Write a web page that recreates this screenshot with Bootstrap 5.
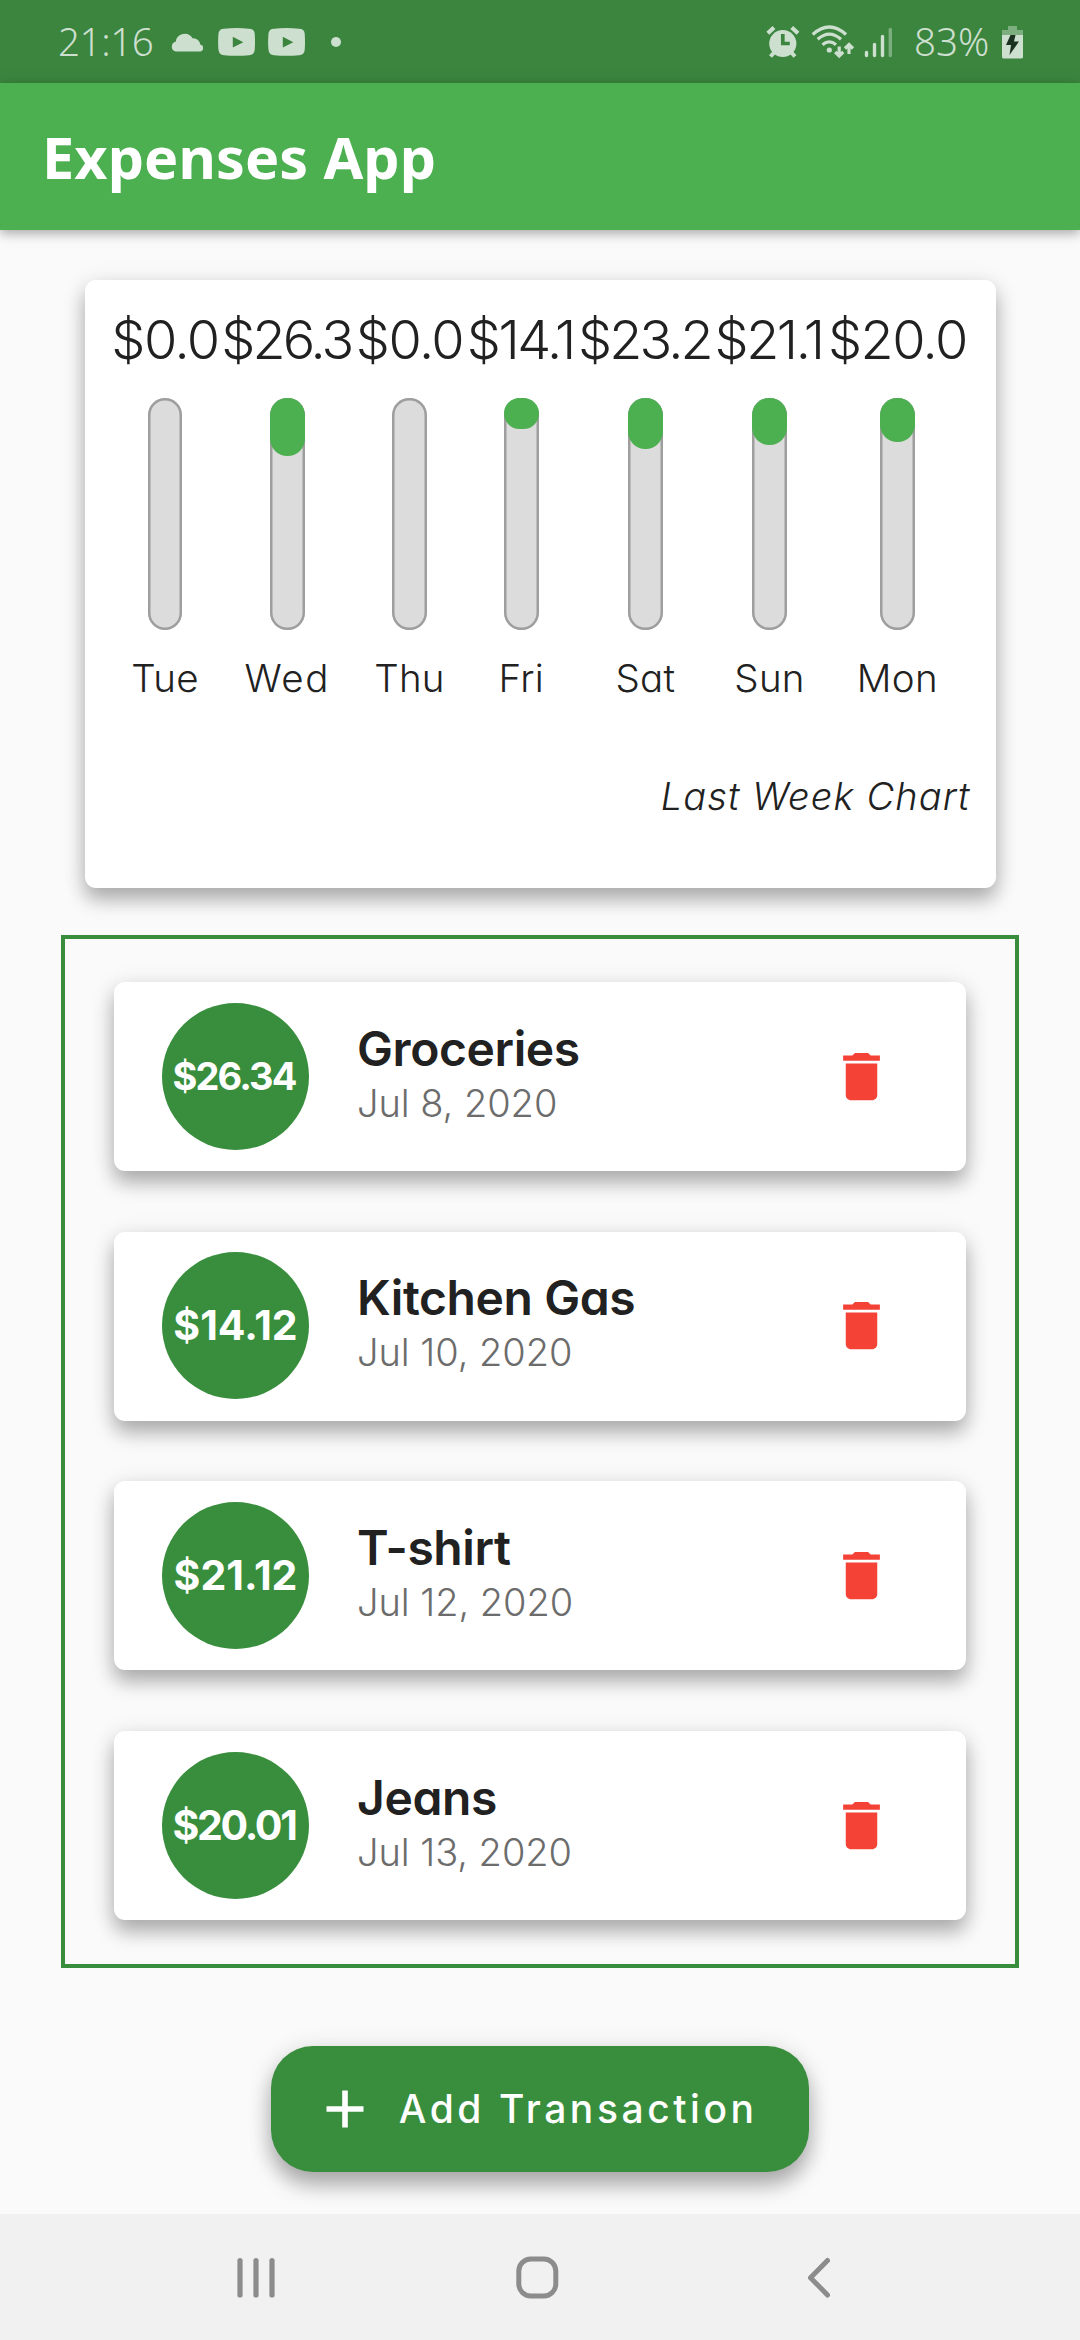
<!DOCTYPE html>
<html lang="en">
<head>
<meta charset="utf-8">
<meta name="viewport" content="width=device-width, initial-scale=1">
<title>Expenses App</title>
<link href="https://cdn.jsdelivr.net/npm/bootstrap@5.3.0/dist/css/bootstrap.min.css" rel="stylesheet">
<style>
  :root { --green: #4caf50; --green-dark: #388e3c; --ink: #212121; }
  body { width: 1080px; height: 2340px; overflow: hidden; background: #fafafa; color: var(--ink);
    font-family: Inter, "Liberation Sans", sans-serif; font-feature-settings: "cv11"; }
  svg { display: block; flex: none; }

  .status-bar { height: 83px; background: #3b853e; color: #cddfce; padding: 0 57px 0 58px;
    font: 350 38.5px/83px "Noto Sans", sans-serif; }
  .status-time { letter-spacing: -.4px; width: 112px; }
  .status-pct { letter-spacing: 0; margin-left: 20px; width: 88px; }
  .video-gap { margin-left: 13px; }
  .dot-gap { margin-left: 26px; }
  .app-bar { height: 147px; background: var(--green); padding: 2px 0 0 42px; position: relative;
    box-shadow: 0 4px 9px rgba(0,0,0,.24), 0 2px 18px rgba(0,0,0,.1); }
  .app-title { font: 700 57.5px/1 "Noto Sans", sans-serif; color: #fff; letter-spacing: .1px; }

  .raised { background: #fff; border: 0; border-radius: 11px;
    box-shadow: 0 12px 19px rgba(0,0,0,.27), 0 3px 24px rgba(0,0,0,.1); }
  .chart-card { width: 911px; height: 607.5px; margin-top: 50px; padding: 30px 25px 0 25.5px; }
  .day-col { flex: none; width: 110px; }
  .day-col.w135 { width: 134.5px; }
  .day-col.w114 { width: 113.7px; }
  .day-col.w142 { width: 142px; }
  .amount { font-size: 54px; line-height: 60px; font-weight: 300; letter-spacing: -1.5px; white-space: nowrap; }
  .w135 .amount { letter-spacing: -2.85px; padding-right: 2px; }
  .w114 .amount { letter-spacing: -2.45px; padding-right: 2px; }
  .track { width: 34.5px; height: 232.5px; margin-top: 27.5px; border-radius: 17.25px; background: #dcdcdc;
    box-shadow: inset 0 0 0 2.5px #9e9e9e; }
  .fill { background: var(--green); border-radius: 17.25px; }
  .day { font-size: 38.5px; line-height: 48px; font-weight: 300; margin-top: 24px; letter-spacing: .3px; }
  .day.wide { letter-spacing: 1.6px; }
  .caption-text { font-size: 38px; line-height: 48px; font-weight: 300; font-style: italic; margin-top: 70px; padding-right: -1px; letter-spacing: 1.1px; }

  .tx-list { width: 958px; height: 1033px; margin-top: 47px; border: 4px solid var(--green-dark);
    padding: 43.5px 49px 0; gap: 60.7px; }
  .tx { height: 189px; flex: none; padding: 0 73px 1px 48px; flex-direction: row; }
  .disc { width: 147px; height: 147px; flex: none; background: var(--green-dark); color: #fff; font-weight: 700; font-size: 41px; line-height: 1; }
  .tx:first-child .disc { font-size: 38px; letter-spacing: -1.9px; padding-right: 3px; }
  .tx:last-child .disc { letter-spacing: -2.3px; padding-right: 3px; }
  .tx-text { margin-left: 48px; padding-bottom: 6px; }
  .tx-name { font-size: 48px; line-height: 56px; font-weight: 600; letter-spacing: -.4px; }
  .tx-date { font-size: 38px; line-height: 46px; font-weight: 300; color: #6c6c6c; margin-top: 3px; letter-spacing: -.05px; }

  .add-btn, .add-btn:hover { width: 538.5px; height: 126px; margin-top: 78.5px; border: 0; border-radius: 42px; background: var(--green-dark); color: #fff;
    font-size: 39px; font-weight: 500; letter-spacing: 3.55px; padding: 0 0 0 55px;
    box-shadow: 0 14px 20px rgba(0,0,0,.27), 0 3px 26px rgba(0,0,0,.12); }
  .add-btn svg { margin-right: 35px; }
  .nav-keys { height: 126px; background: #f1f1f1; padding-left: 237px; position: relative; }
  .key-home { margin-left: 241px; }
  .key-back { margin-left: 248px; }
</style>
</head>
<body class="d-flex flex-column align-items-center m-0">

<svg width="0" height="0" class="position-absolute">
  <symbol id="trash" viewBox="0 0 24 24"><path fill="#f44336" d="M6 19c0 1.1.9 2 2 2h8c1.1 0 2-.9 2-2V7H6v12zM19 4h-3.500l-1-1h-5l-1 1H5v2h14V4z"/></symbol>
  <symbol id="video" viewBox="0 0 37 28"><path fill="#cddfce" fill-rule="evenodd" d="M6 .8Q18.500-.6 31 .8Q36.300 1 36.700 5.500Q37.300 14 36.700 22Q36.300 26.800 31 27.200Q18.500 28.500 6 27.200Q1 26.800 .5 22Q-.3 14 .5 5.500Q1 1 6 .8ZM14.800 8.800V19.500L25.300 14.200Z"/></symbol>
</svg>

<div class="status-bar w-100 d-flex align-items-center">
  <div class="status-time">21:16</div>
  <svg width="35" height="20" viewBox="0 0 34 20" fill="#cddfce"><path d="M5 19.500A5 5 0 0 1 5.200 9.800A9 9 0 0 1 22 6.300A6.800 6.800 0 0 1 29.700 12.500A3.600 3.600 0 0 1 30 19.500Z"/></svg>
  <svg class="video-gap" width="37" height="28"><use href="#video"/></svg>
  <svg class="video-gap" width="37" height="28"><use href="#video"/></svg>
  <svg class="dot-gap" width="10" height="10"><circle cx="5" cy="5" r="5" fill="#cddfce"/></svg>

  <svg class="ms-auto" width="128" height="34" viewBox="766 24 128 34" fill="none" stroke="#cddfce">
    <circle cx="782.8" cy="42.500" r="13.600" fill="#cddfce" stroke="none"/>
    <path stroke-width="4.200" d="M767.800 32.300L774 26.500M791.700 26.500L798 32.300"/>
    <path stroke-width="4" d="M775 50.500L770.500 55.500M790.500 50.500L795 55.500"/>
    <path stroke="#3b853e" stroke-width="3.700" d="M782.800 33V42.500H789.800"/>
    <circle cx="829.3" cy="49" r="2.600" fill="#cddfce" stroke="none"/>
    <path stroke-width="3.300" d="M812.700 33.500Q829.300 18.500 846 33.500M817.700 38.200Q829.300 28 841 38.200M822.500 43.700Q829.300 38 836 43.700"/>
    <path stroke-width="3.200" d="M839.200 45.500V55M835.200 51L839.200 55L843.200 51M849 53V43.500M845 47.500L849 43.500L853 47.500"/>
    <path stroke-width="3.400" stroke-linecap="round" d="M866.500 51.500V54.500M874.500 43.500V54.500M882.500 35.500V54.500"/>
    <path stroke-width="3.400" stroke-linecap="round" opacity=".45" d="M890.300 28.500V54.500"/>
  </svg>
  <div class="status-pct">83%</div>
  <svg width="21" height="34" viewBox="0 0 21 34" fill="#cddfce"><path opacity=".45" d="M6 1H15V5H21V10H0V5H6Z"/><path d="M0 10H21V32Q21 33.500 19 33.500H2Q0 33.500 0 32Z"/><path fill="#1c3220" d="M8.500 10H13.500L12 16.500H17L7.500 30L9 20H4Z"/></svg>
</div>

<header class="app-bar w-100 d-flex align-items-center">
  <h1 class="app-title m-0">Expenses App</h1>
</header>

<main class="d-flex flex-column align-items-center flex-grow-1">
  <section class="card raised chart-card">
    <div class="d-flex">
      <div class="day-col d-flex flex-column align-items-center"><div class="amount">$0.0</div><div class="track"></div><div class="day">Tue</div></div>
      <div class="day-col w135 d-flex flex-column align-items-center"><div class="amount">$26.3</div><div class="track"><div class="fill" style="height:58.500px"></div></div><div class="day wide">Wed</div></div>
      <div class="day-col d-flex flex-column align-items-center"><div class="amount">$0.0</div><div class="track"></div><div class="day">Thu</div></div>
      <div class="day-col w114 d-flex flex-column align-items-center"><div class="amount">$14.1</div><div class="track"><div class="fill" style="height:31.500px"></div></div><div class="day">Fri</div></div>
      <div class="day-col w135 d-flex flex-column align-items-center"><div class="amount">$23.2</div><div class="track"><div class="fill" style="height:51.500px"></div></div><div class="day">Sat</div></div>
      <div class="day-col w114 d-flex flex-column align-items-center"><div class="amount">$21.1</div><div class="track"><div class="fill" style="height:47px"></div></div><div class="day">Sun</div></div>
      <div class="day-col w142 d-flex flex-column align-items-center"><div class="amount">$20.0</div><div class="track"><div class="fill" style="height:44.500px"></div></div><div class="day">Mon</div></div>
    </div>
    <div class="caption-text text-end">Last Week Chart</div>
  </section>

  <section class="tx-list d-flex flex-column">
    <article class="card raised tx align-items-center">
      <div class="disc rounded-circle d-flex align-items-center justify-content-center">$26.34</div>
      <div class="tx-text me-auto"><div class="tx-name">Groceries</div><div class="tx-date">Jul 8, 2020</div></div>
      <svg width="63" height="63"><use href="#trash"/></svg>
    </article>
    <article class="card raised tx align-items-center">
      <div class="disc rounded-circle d-flex align-items-center justify-content-center">$14.12</div>
      <div class="tx-text me-auto"><div class="tx-name">Kitchen Gas</div><div class="tx-date">Jul 10, 2020</div></div>
      <svg width="63" height="63"><use href="#trash"/></svg>
    </article>
    <article class="card raised tx align-items-center">
      <div class="disc rounded-circle d-flex align-items-center justify-content-center">$21.12</div>
      <div class="tx-text me-auto"><div class="tx-name">T-shirt</div><div class="tx-date">Jul 12, 2020</div></div>
      <svg width="63" height="63"><use href="#trash"/></svg>
    </article>
    <article class="card raised tx align-items-center">
      <div class="disc rounded-circle d-flex align-items-center justify-content-center">$20.01</div>
      <div class="tx-text me-auto"><div class="tx-name">Jeans</div><div class="tx-date">Jul 13, 2020</div></div>
      <svg width="63" height="63"><use href="#trash"/></svg>
    </article>
  </section>

  <button class="btn add-btn d-flex align-items-center" type="button">
    <svg width="38" height="38" viewBox="0 0 38 38"><path stroke="#fff" stroke-width="5.600" d="M19 .5V37.500M.5 19H37.500"/></svg>
    Add Transaction
  </button>
</main>

<nav class="nav-keys w-100 d-flex align-items-center">
  <svg width="38" height="42" viewBox="0 0 38 42" stroke="#8c8c8c" stroke-width="5.200" stroke-linecap="round"><path d="M3 4.500V39M19 4.500V39M35 4.500V39"/></svg>
  <svg class="key-home" width="43" height="43" viewBox="0 0 43 43"><rect x="2.800" y="3" width="37" height="37" rx="12" fill="none" stroke="#8c8c8c" stroke-width="5"/></svg>
  <svg class="key-back" width="25" height="42" viewBox="0 0 25 42"><path d="M20.500 4.500L3.500 21.700L20.500 39" fill="none" stroke="#8c8c8c" stroke-width="5" stroke-linecap="round" stroke-linejoin="round"/></svg>
</nav>

<script src="https://cdn.jsdelivr.net/npm/bootstrap@5.3.0/dist/js/bootstrap.bundle.min.js"></script>
</body>
</html>
